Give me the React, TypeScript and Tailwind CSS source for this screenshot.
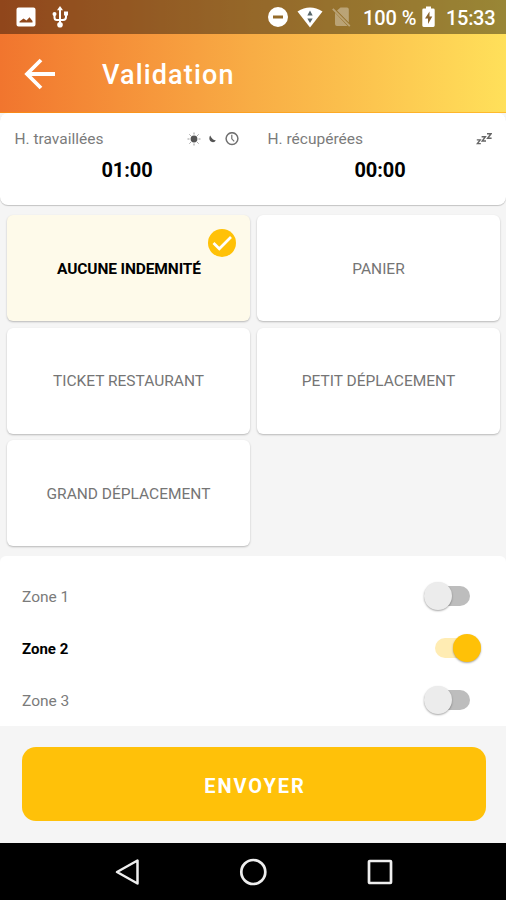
import React from "react";
import clsx from "clsx";

const allowances = [
  "AUCUNE INDEMNITÉ",
  "PANIER",
  "TICKET RESTAURANT",
  "PETIT DÉPLACEMENT",
  "GRAND DÉPLACEMENT",
];

const zones = ["Zone 1", "Zone 2", "Zone 3"];

const StatusBar = () => {
  return (
    <div className="flex h-[34px] items-center bg-black/40 pl-4 pr-[11px] text-[20px] font-medium text-white">
      <svg width="20" height="20" viewBox="0 0 20 20">
        <path
          fill="currentColor"
          fillRule="evenodd"
          d="M2.5 0.5h15a2 2 0 0 1 2 2v15a2 2 0 0 1-2 2h-15a2 2 0 0 1-2-2v-15a2 2 0 0 1 2-2zM3.5 15.5h13v-1.5l-3-3.7-3 3.2-3-2-4 3z"
        />
      </svg>
      <svg
        className="ml-4"
        width="17"
        height="22"
        viewBox="0 0 17 22"
        fill="none"
        stroke="currentColor"
        strokeWidth="2"
      >
        <path d="M8 3v16M2.5 8v3.5q0 2.5 2.5 2.5h6q3 0 3-3V7" />
        <g fill="currentColor" stroke="none">
          <path d="M8 0l3 4.2H5z" />
          <circle cx="2.5" cy="8" r="2" />
          <path d="M12 5.5h4v4h-4z" />
          <circle cx="8" cy="18.8" r="2.8" />
        </g>
      </svg>
      <svg className="ml-auto" width="20" height="20" viewBox="0 0 20 20">
        <path
          fill="currentColor"
          fillRule="evenodd"
          d="M10 0a10 10 0 1 0 0 20a10 10 0 0 0 0-20zM5 8.6h10v2.8H5z"
        />
      </svg>
      <svg className="ml-[9px]" width="26" height="21" viewBox="0 0 26 21">
        <path fill="currentColor" d="M0.5 4.5Q13-3.5 25.5 4.5L13 20.5z" />
        <path fill="#58676b" d="M13 3.5l2.7 5h-5.4zM10.3 11.5h5.4L13 16z" />
      </svg>
      <svg className="ml-[9px] opacity-35" width="19" height="20" viewBox="0 0 19 20">
        <path fill="currentColor" d="M8.5 0.5H15q1.8 0 1.8 2v13L5 3.5zM3 5.7L15.5 19H5q-2 0-2-2z" />
        <path stroke="currentColor" strokeWidth="1.8" d="M0.8 1.8l17 17.4" />
      </svg>
      <span className="ml-3 w-[53px] whitespace-nowrap pt-0.5 tracking-[-0.1px]">100 %</span>
      <svg className="ml-[6px]" width="13" height="22" viewBox="0 0 13 22">
        <path
          fill="currentColor"
          d="M4 0.5h5v2h2.3q1.4 0 1.4 1.4v15.7q0 1.4-1.4 1.4H1.7q-1.4 0-1.4-1.4V3.9q0-1.4 1.4-1.4H4z"
        />
        <path fill="#8b652f" d="M7.5 5.5L3 12.5h3v5.5l4.3-7.5H7.5z" />
      </svg>
      <span className="ml-[11px] w-[49px] whitespace-nowrap pt-0.5 tracking-[-0.3px]">15:33</span>
    </div>
  );
};

const SunIcon = () => (
  <svg width="14" height="14" viewBox="0 0 14 14">
    <circle cx="7" cy="7" r="3.4" fill="#555" />
    <path
      stroke="#999"
      d="M7 0.5v2M7 11.5v2M0.5 7h2M11.5 7h2M2.4 2.4l1.4 1.4M10.2 10.2l1.4 1.4M11.6 2.4l-1.4 1.4M3.8 10.2l-1.4 1.4"
    />
  </svg>
);

const MoonIcon = () => (
  <svg width="8" height="8" viewBox="0 0 8 8">
    <path fill="#555" d="M1.2 0.5C-0.6 3 0.4 7.2 4 7.2 5.4 7.2 6.2 6.5 6.8 5.2 4.8 5.4 2.6 3.6 1.2 0.5z" />
  </svg>
);

const ClockIcon = () => (
  <svg width="14" height="14" viewBox="0 0 14 14" fill="none" stroke="#707070">
    <circle cx="7" cy="6.6" r="5.9" strokeWidth="1.5" />
    <path strokeWidth="1.2" d="M6.8 2.8v4l2.4 2.6" />
  </svg>
);

const SleepIcon = () => (
  <svg width="16" height="12" viewBox="0 0 16 12" fill="none" stroke="#666" strokeWidth="1.4">
    <path d="M0.8 6.9h3.4L1.4 10.6h3.4M5.6 3.7h3.8L6.2 8h3.8M11 0.8h4l-3.4 4.4h4" />
  </svg>
);

type TimeBoxProps = {
  label: string;
  value: string;
  children: React.ReactNode;
};

const TimeBox = ({ label, value, children }: TimeBoxProps) => {
  return (
    <div className="flex-1 px-[14px] pt-4">
      <div className="flex h-5 items-center justify-between text-[#7b7b7b]">
        <span className="pl-[0.5px] pt-[2px] text-[15.5px]">{label}</span>
        <div className="flex items-center">{children}</div>
      </div>
      <div className="mt-[7px] pl-px text-center text-[20px] font-bold leading-7 tracking-[-0.1px] text-black">
        {value}
      </div>
    </div>
  );
};

const Allowance = ({ label, selected }: { label: string; selected: boolean }) => {
  return (
    <button
      className={clsx(
        "relative flex h-[106px] items-center justify-center rounded-md pt-[3px] text-[15.5px] shadow-[0_1px_2px_rgba(0,0,0,0.25)]",
        selected
          ? "bg-[#fefaea] pl-px font-bold tracking-[-0.12px] text-black"
          : "bg-white text-[#757575]"
      )}
    >
      {label}
      {selected && (
        <svg className="absolute right-[14px] top-[14px]" width="28" height="28" viewBox="0 0 28 28">
          <circle cx="14" cy="14" r="14" fill="#ffc107" />
          <path d="M5.5 14l5.8 5.8L23 8" fill="none" stroke="#fff" strokeWidth="2.7" />
        </svg>
      )}
    </button>
  );
};

const Toggle = ({ on }: { on: boolean }) => {
  return (
    <span
      className={clsx(
        "flex h-[30px] w-[47px] items-center pb-[2px]",
        on ? "mr-[25px] justify-end" : "mr-9 justify-start"
      )}
    >
      <span
        className={clsx(
          "flex h-5 w-[46px] items-center rounded-full",
          on ? "justify-end bg-[#ffecb3]" : "ml-[1px] bg-[#bdbdbd]"
        )}
      >
        <span
          className={clsx(
            "size-7 shrink-0 rounded-full shadow-[0_1px_2px_rgba(0,0,0,0.35)]",
            on ? "bg-[#ffc107]" : "bg-[#ececec]"
          )}
        />
      </span>
    </span>
  );
};

const App = () => {
  return (
    <div className="flex h-[900px] w-[506px] flex-col overflow-hidden bg-[#f5f5f5] font-[Roboto,sans-serif]">
      <header className="h-[113px] shrink-0 bg-linear-to-r from-[#f1752e] via-[#f8ad45] to-[#ffe05a]">
        <StatusBar />
        <div className="flex h-[79px] items-center border-b border-[#ff9800]/50 pl-6 pt-px text-white">
          <svg width="31" height="32" viewBox="0 0 31 32" fill="none" stroke="currentColor" strokeWidth="3.8">
            <path d="M31 16H3M17 2L3 16l14 14" />
          </svg>
          <h1 className="ml-[47px] pt-[3px] text-[27px] font-medium tracking-[1.15px]">Validation</h1>
        </div>
      </header>

      <section className="flex h-[92px] shrink-0 rounded-lg bg-white shadow-[0_1px_1px_rgba(0,0,0,0.2)]">
        <TimeBox label="H. travaillées" value="01:00">
          <SunIcon />
          <span className="ml-2 flex">
            <MoonIcon />
          </span>
          <span className="ml-2 flex">
            <ClockIcon />
          </span>
        </TimeBox>
        <TimeBox label="H. récupérées" value="00:00">
          <SleepIcon />
        </TimeBox>
      </section>

      <section className="mt-[10px] grid grid-cols-2 gap-x-[7px] gap-y-[6.5px] pl-[7px] pr-[6px]">
        {allowances.map((label, index) => (
          <Allowance key={label} label={label} selected={index === 0} />
        ))}
      </section>

      <section className="mt-[10px] h-[170px] shrink-0 rounded-t-md bg-white pl-[22px] pt-[15px]">
        {zones.map((zone, index) => (
          <div
            key={zone}
            className={clsx(
              "flex h-[52px] items-center justify-between",
              index === 1
                ? "text-[15px] font-bold text-black"
                : "text-[15.5px] text-[#7b7b7b]"
            )}
          >
            <span className={clsx(index !== 1 && "pt-[2px]")}>{zone}</span>
            <Toggle on={index === 1} />
          </div>
        ))}
      </section>

      <button className="ml-[22px] mr-5 mt-[21px] h-[74px] shrink-0 rounded-[14px] bg-[#ffc109] pl-0.5 pt-[3px] text-[20px] font-bold tracking-[1.9px] text-white">
        ENVOYER
      </button>

      <nav className="mt-auto flex h-[57px] shrink-0 items-center bg-black pl-[115px]">
        <svg width="25" height="28" viewBox="0 0 25 28" fill="none" stroke="#eee" strokeWidth="2.5">
          <path d="M22.5 2.5v23L2 14z" strokeLinejoin="round" />
        </svg>
        <svg className="ml-[99px]" width="28" height="28" viewBox="0 0 28 28" fill="none" stroke="#eee" strokeWidth="2.7">
          <circle cx="14.3" cy="14" r="12" />
        </svg>
        <svg className="ml-[100px]" width="26" height="26" viewBox="0 0 26 26" fill="none" stroke="#eee" strokeWidth="2.7">
          <rect x="2" y="2" width="22" height="22" rx="0.7" />
        </svg>
      </nav>
    </div>
  );
};

export default App;
